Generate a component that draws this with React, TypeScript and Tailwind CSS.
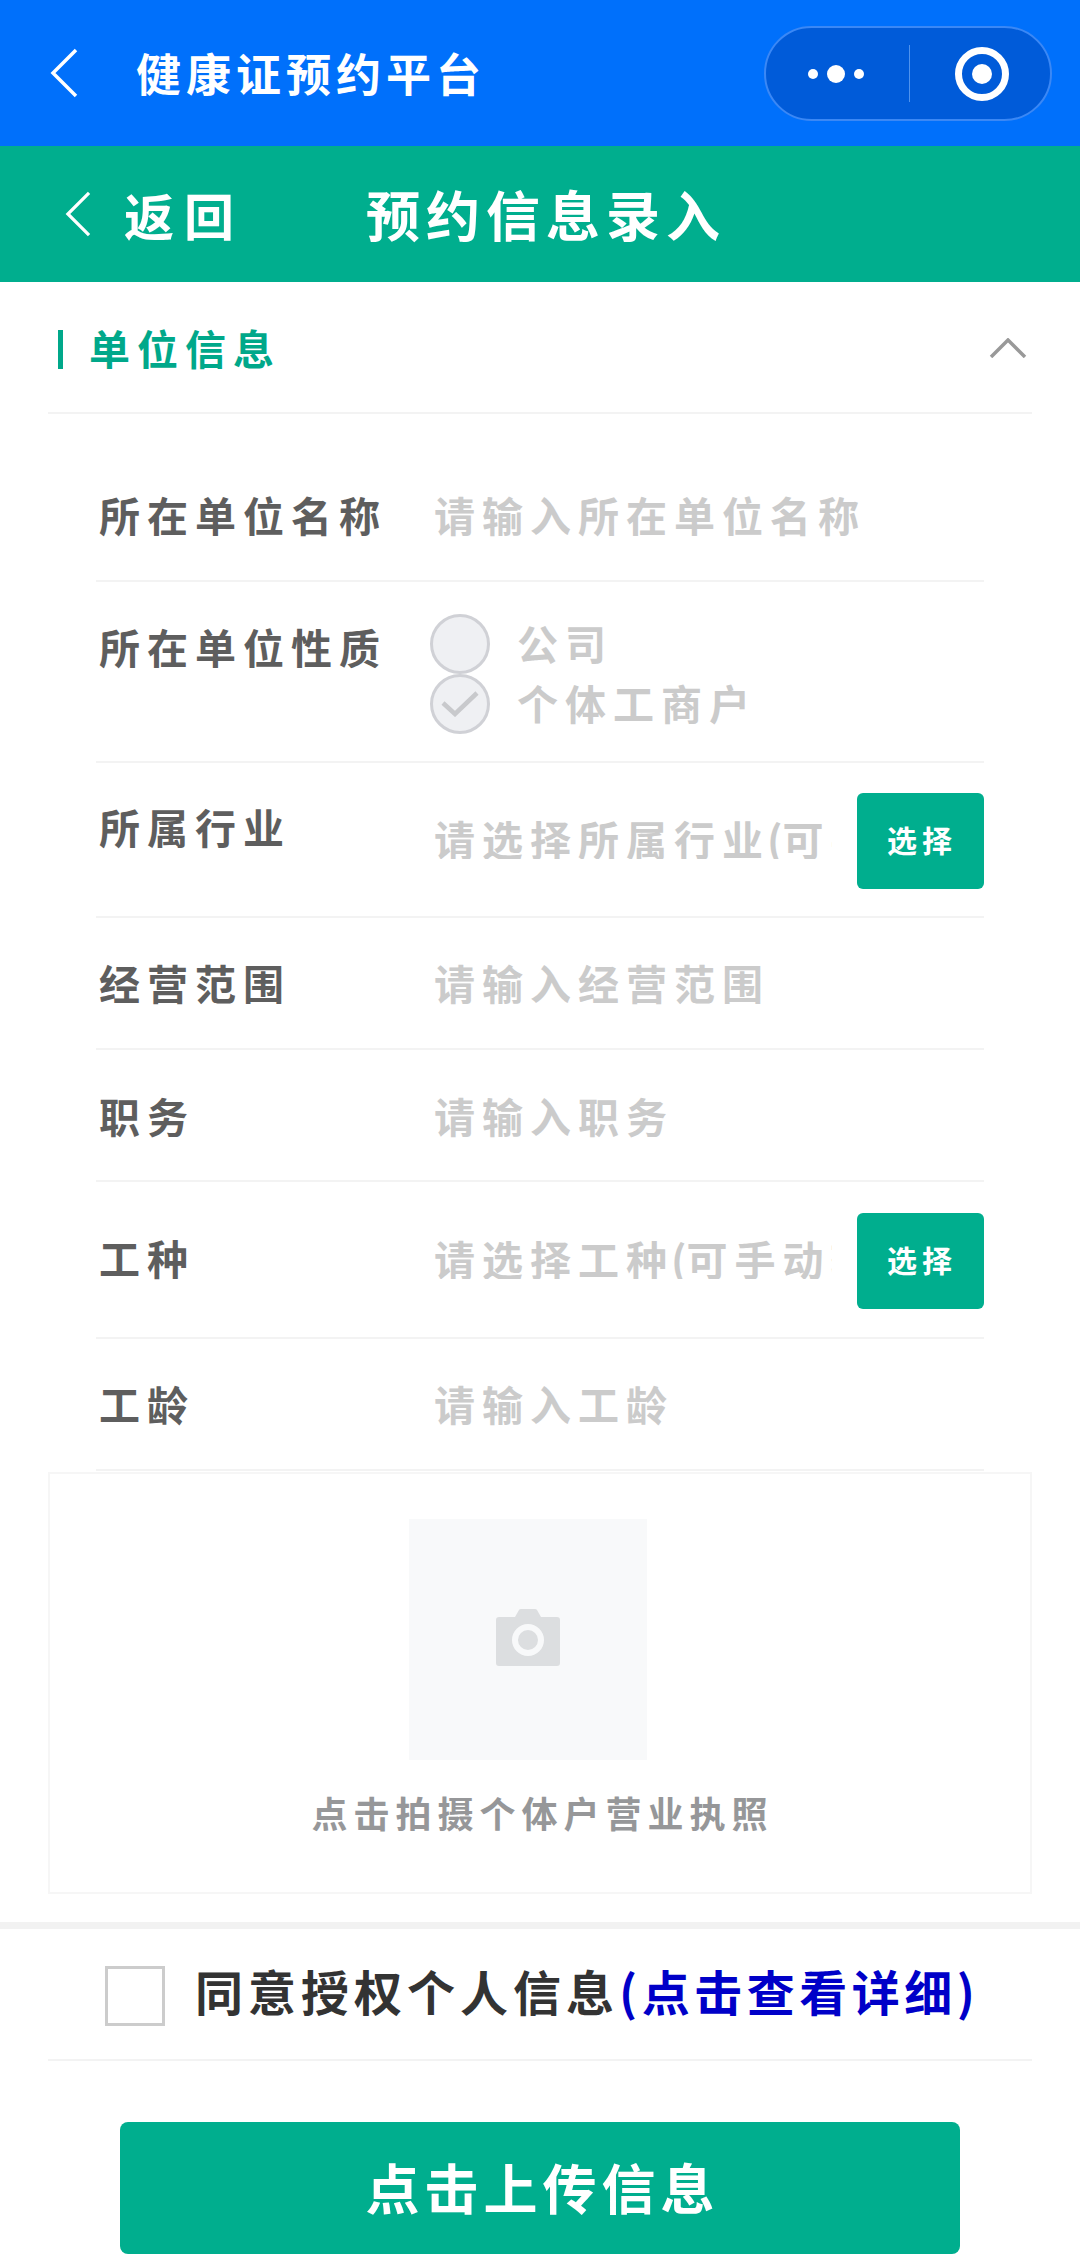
import React from 'react'

const BRAND = 'bg-[#00ae8e]'
const FIELD_TEXT = 'text-[41px] leading-[42px] tracking-[7px]'

function Chevron({ className }: { className: string }) {
  return (
    <svg viewBox="0 0 28 50" className={className} fill="none" stroke="white" strokeWidth="3.5">
      <path d="M26 2 L3 25 L26 48" />
    </svg>
  )
}

function Row({ label, height, pt, children }: { label: string; height: string; pt: string; children: React.ReactNode }) {
  return (
    <div className={`flex items-start border-b-2 border-[#f3f3f3] ${height} ${pt}`}>
      <div className={`w-[338px] pl-[3px] shrink-0 text-[#5e5e5e] ${FIELD_TEXT}`}>{label}</div>
      {children}
    </div>
  )
}

function Placeholder({ text }: { text: string }) {
  return <div className={`text-[#cbcbcb] whitespace-nowrap ${FIELD_TEXT}`}>{text}</div>
}

function SelectField({ name, lift, offset }: { name: string; lift: string; offset: string }) {
  return (
    <div className={`flex-1 flex items-start min-w-0 ${lift}`}>
      <div className={`w-[398px] overflow-hidden text-[#cbcbcb] whitespace-nowrap ${FIELD_TEXT} ${offset}`}>
        请选择{name}
        <span className="-ml-[3px] tracking-[0px]">(</span>
        可手动输入)
      </div>
      <div className={`${BRAND} ml-auto w-[127px] h-[96px] rounded-[6px] flex items-center justify-center pl-[3px] pb-[4px] text-white text-[30px] tracking-[5px]`}>
        选择
      </div>
    </div>
  )
}

function Radio({ label, checked }: { label: string; checked?: boolean }) {
  return (
    <div className="flex items-center h-[60px]">
      <div className="w-[60px] h-[60px] rounded-full bg-[#eff0f3] border-[3px] border-[#d0d1d6] flex items-center justify-center">
        {checked && (
          <svg viewBox="0 0 40 26" className="w-[40px] h-[26px]" fill="none" stroke="#c8c9cc" strokeWidth="4.5">
            <path d="M3 12 L15 23 L37 2" />
          </svg>
        )}
      </div>
      <div className={`ml-[27px] -mt-[5px] text-[#cbcbcb] ${FIELD_TEXT}`}>{label}</div>
    </div>
  )
}

export default function App() {
  return (
    <div className="w-[1080px] h-[2256px] overflow-hidden bg-white font-bold font-['Noto_Sans_CJK_SC',sans-serif]">
      {/* mini program bar */}
      <header className="h-[146px] bg-[#0070fb] flex items-center pl-[50px] pr-[28px]">
        <Chevron className="w-[28px] h-[50px]" />
        <div className="ml-[58px] text-[45px] leading-[46px] tracking-[5px] text-white">健康证预约平台</div>
        <div className="ml-auto w-[288px] h-[95px] mt-[1px] rounded-full bg-[#005bd9] border-2 border-[#3b88f5] flex items-center">
          <div className="w-[143px] flex items-center justify-center gap-[9px] pr-[4px]">
            <span className="w-[10px] h-[10px] rounded-full bg-white" />
            <span className="w-[18px] h-[18px] rounded-full bg-white" />
            <span className="w-[10px] h-[10px] rounded-full bg-white" />
          </div>
          <div className="w-[1px] h-[57px] bg-[#4f93ee]" />
          <div className="flex-1 flex items-center justify-center pl-[4px]">
            <svg viewBox="0 0 54 54" className="w-[54px] h-[54px]">
              <circle cx="27" cy="27" r="23.5" fill="none" stroke="white" strokeWidth="7" />
              <circle cx="27" cy="27" r="10" fill="white" />
            </svg>
          </div>
        </div>
      </header>

      {/* page title */}
      <div className={`${BRAND} h-[136px] flex items-center pl-[65px]`}>
        <Chevron className="w-[26px] h-[46px]" />
        <div className="ml-[33px] text-[50px] leading-[56px] tracking-[10px] text-white">返回</div>
        <div className="ml-[122px] text-[54px] leading-[56px] tracking-[6px] text-white">预约信息录入</div>
      </div>

      {/* section title */}
      <div className="mx-[48px] h-[132px] border-b-2 border-[#f3f3f3] flex items-start pt-[48px]">
        <div className="ml-[10px] w-[5px] h-[39px] bg-[#00a88a]" />
        <div className="ml-[26px] -mt-[3px] text-[41px] leading-[40px] tracking-[7px] text-[#00a88a]">单位信息</div>
        <svg viewBox="0 0 38 20" className="ml-auto mr-[5px] mt-[8px] w-[38px] h-[20px]" fill="none" stroke="#999999" strokeWidth="3.5">
          <path d="M2 19 L19 2 L36 19" />
        </svg>
      </div>

      <div className="mx-[96px]">
        <Row label="所在单位名称" height="h-[168px]" pt="pt-[79px]">
          <Placeholder text="请输入所在单位名称" />
        </Row>
        <Row label="所在单位性质" height="h-[181px]" pt="pt-[43px]">
          <div className="-mt-[11px] -ml-[4px]">
            <Radio label="公司" />
            <Radio label="个体工商户" checked />
          </div>
        </Row>
        <Row label="所属行业" height="h-[155px]" pt="pt-[42px]">
          <SelectField name="所属行业" lift="-mt-[12px]" offset="mt-[24px]" />
        </Row>
        <Row label="经营范围" height="h-[132px]" pt="pt-[43px]">
          <Placeholder text="请输入经营范围" />
        </Row>
        <Row label="职务" height="h-[132px]" pt="pt-[44px]">
          <Placeholder text="请输入职务" />
        </Row>
        <Row label="工种" height="h-[157px]" pt="pt-[54px]">
          <SelectField name="工种" lift="-mt-[23px]" offset="mt-[24px]" />
        </Row>
        <Row label="工龄" height="h-[132px]" pt="pt-[43px]">
          <Placeholder text="请输入工龄" />
        </Row>
      </div>

      {/* licence photo */}
      <div className="mx-[48px] h-[422px] mt-[1px] border-2 border-[#f6f6f6] flex flex-col items-center pt-[45px]">
        <div className="w-[238px] h-[241px] mr-[24px] bg-[#f8f9fa] flex items-center justify-center pb-[4px]">
          <svg viewBox="0 0 64 57" className="w-[64px] h-[57px]">
            <path d="M19 8 L23 1 Q23.5 0 25 0 L39 0 Q40.5 0 41 1 L45 8 L61 8 Q64 8 64 11 L64 54 Q64 57 61 57 L3 57 Q0 57 0 54 L0 11 Q0 8 3 8 Z" fill="#dcdee0" />
            <circle cx="32" cy="31" r="13" fill="none" stroke="#f8f9fa" strokeWidth="6" />
          </svg>
        </div>
        <div className="mt-[32px] pl-[5px] text-[36px] leading-[40px] tracking-[6px] text-[#969799]">点击拍摄个体户营业执照</div>
      </div>

      <div className="mt-[28px] h-[7px] bg-[#f2f2f2]" />

      {/* agreement */}
      <div className="mx-[48px] h-[132px] border-b-2 border-[#f3f3f3] flex items-start pt-[37px]">
        <div className="ml-[57px] w-[60px] h-[60px] border-[3px] border-[#cccccc] shrink-0" />
        <div className="ml-[30px] -mt-[3px] text-[48px] leading-[54px] tracking-[5px] text-[#333333] whitespace-nowrap">
          同意授权个人信息<span className="tracking-[4.5px] text-[#0000c8]">(点击查看详细)</span>
        </div>
      </div>

      <div className="mt-[61px] mx-[120px] h-[132px] rounded-[8px] bg-[#00ae8e] flex items-center justify-center pl-[5px] pb-[4px] text-[54px] tracking-[5px] text-white">
        点击上传信息
      </div>
    </div>
  )
}
